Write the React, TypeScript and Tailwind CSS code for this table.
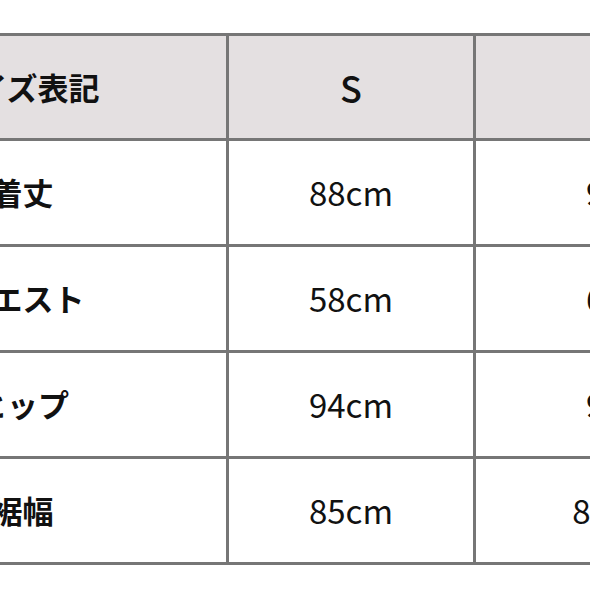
const rows = [
  { label: "着丈", s: "88cm", m: "92cm" },
  { label: "ウエスト", s: "58cm", m: "62cm" },
  { label: "ヒップ", s: "94cm", m: "98cm" },
  { label: "裾幅", s: "85cm", m: "87.5cm" },
];

const jp = { fontFamily: '"Noto Sans CJK JP", "Noto Sans", sans-serif' };

export default function App() {
  return (
    <div className="w-[590px] h-[590px] overflow-hidden bg-white pt-[33px]" style={jp}>
      {/* size table, cropped on both sides */}
      <div className="ml-[-184px] w-[1020px] grid grid-cols-[407px_244px_304px] gap-[3px] p-[3px] bg-[#767676]">
        {/* header */}
        <div className="h-[102px] bg-[#e4e0e1] flex items-center justify-center text-[31px] font-bold text-[#111]">
          サイズ表記
        </div>
        <div className="h-[102px] bg-[#e4e0e1] flex items-center justify-center text-[36px] font-medium text-[#111]">
          S
        </div>
        <div className="h-[102px] bg-[#e4e0e1] flex items-center justify-center text-[36px] font-medium text-[#111]">
          M
        </div>

        {rows.map((r, i) => (
          <div key={i} className="contents">
            <div className="h-[103px] bg-white flex items-center justify-center text-[31px] font-bold text-[#111]">
              {r.label}
            </div>
            <div className="h-[103px] bg-white flex items-center justify-center text-[33px] text-[#111]">
              {r.s}
            </div>
            <div className="h-[103px] bg-white flex items-center justify-center text-[33px] text-[#111]">
              {r.m}
            </div>
          </div>
        ))}
      </div>
    </div>
  );
}
